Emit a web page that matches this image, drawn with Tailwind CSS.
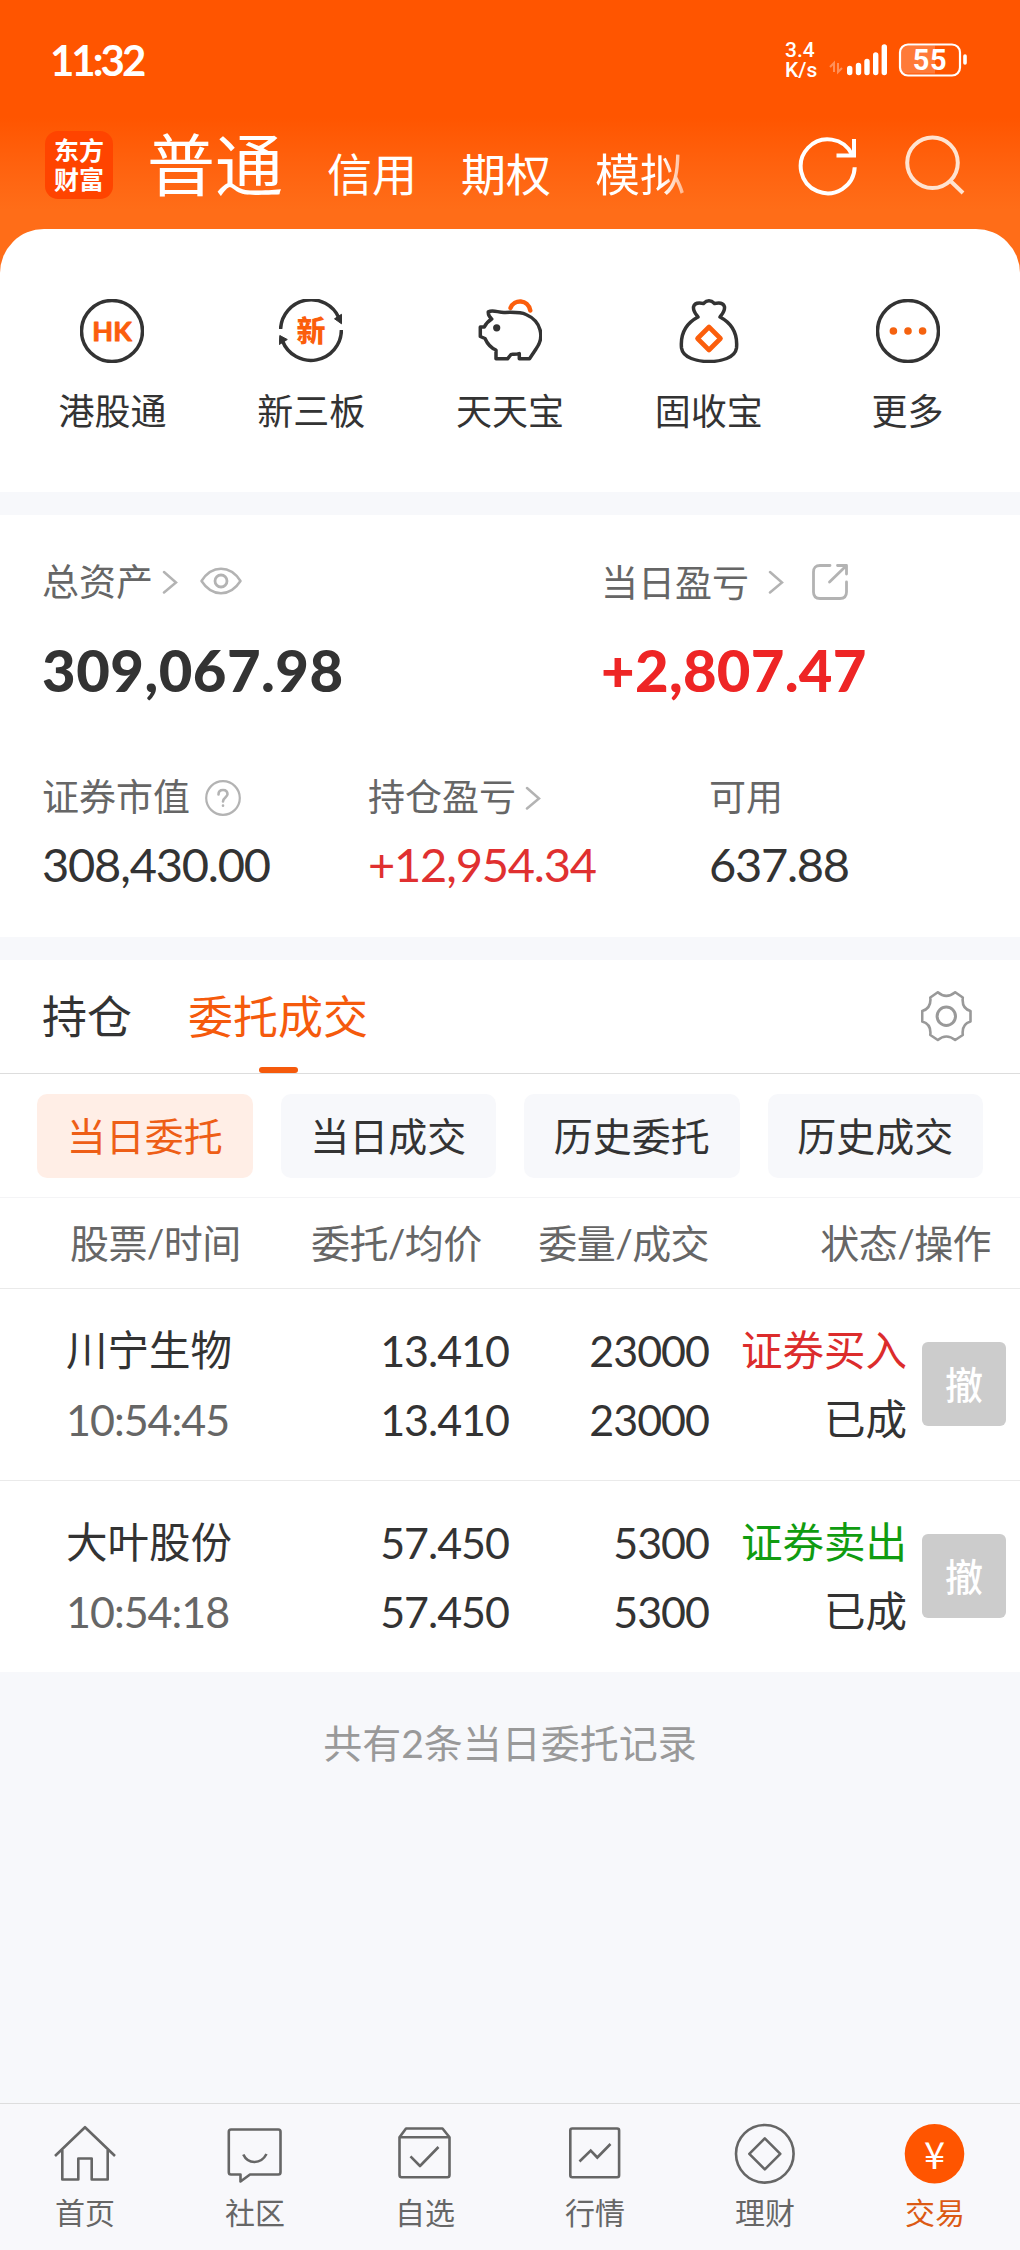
<!DOCTYPE html>
<html lang="zh-CN">
<head>
    <meta charset="UTF-8">
    <meta name="viewport" content="width=device-width, initial-scale=1.0">
    <title>普通交易</title>
    <script src="https://cdn.jsdelivr.net/npm/@tailwindcss/browser@4"></script>
</head>
<body class="flex flex-col w-[1020px] h-[2250px] overflow-hidden bg-[#f7f8fb] text-[#333] leading-none whitespace-nowrap font-[Lato,'Noto_Sans_CJK_SC',sans-serif]">

    <!-- Header -->
    <div class="h-[280px] shrink-0 bg-linear-to-b from-[#ff5500] from-42% to-[#ff6d18] to-75% text-white">
        <div class="h-[120px] flex items-center justify-between pl-[50px] pr-[45px]">
            <span class="text-[42px] font-bold tracking-[-3px]">11:32</span>
            <div class="flex items-center">
                <div class="flex flex-col w-[36px] text-[21px] leading-[20px] font-medium font-[Roboto]">
                    <span>3.4</span>
                    <span>K/s</span>
                </div>
                <svg class="ml-2 w-[146px] h-[36px]" viewBox="0 0 146 36" fill="none">
                    <path d="M1 25l4-4v9M9 21v9l4-4" stroke="#fff" stroke-opacity=".35" stroke-width="2"/>
                    <path d="M20.700 26.500v4M29.500 23.500v7M38 19.500v11M46.700 13v17.500M55.300 5v25.500" stroke="#fff" stroke-width="5.400" stroke-linecap="round"/>
                    <path d="M71 9.500q0-6 6-6H106v28H77q-6 0-6-6z" fill="#fff" fill-opacity=".22"/>
                    <rect x="71" y="2.500" width="60" height="31" rx="8" stroke="#fff" stroke-width="2.200"/>
                    <path d="M136 14v7" stroke="#fff" stroke-width="3.600" stroke-linecap="round"/>
                    <text x="101" y="28" fill="#fff" text-anchor="middle" font-family="Roboto" font-weight="700" font-size="29" letter-spacing=".5">55</text>
                </svg>
            </div>
        </div>
        <div class="h-[109px] flex items-center pl-[45px]">
            <div class="w-[68px] h-[68px] -mt-[19px] rounded-[13px] bg-[#ff4400] flex flex-col items-center justify-center gap-1 text-[25px] font-bold">
                <span>东方</span>
                <span>财富</span>
            </div>
            <span class="ml-[34px] -mt-[19px] text-[68px] font-normal">普通</span>
            <span class="ml-[44px] mt-[2px] text-[45px]">信用</span>
            <span class="ml-[44px] mt-[2px] text-[45px]">期权</span>
            <span class="ml-[44px] mt-[2px] text-[45px] bg-linear-to-r from-white from-75% to-white/50 bg-clip-text text-transparent">模拟</span>
            <svg class="ml-[111px] -mt-[17px] w-[64px] h-[64px]" viewBox="0 0 64 64" fill="none" stroke="#fff" stroke-width="4">
                <path d="M58.700 33.300A27 27 0 1 1 56 20.500"/>
                <path d="M58 5v16.500H40.500"/>
            </svg>
            <svg class="ml-[44px] -mt-[17px] w-[64px] h-[64px]" viewBox="0 0 64 64" fill="none" stroke="#ffe3d0" stroke-width="4">
                <circle cx="28.500" cy="28.700" r="25.300"/>
                <path d="M46 46.500L59 59"/>
            </svg>
        </div>
    </div>

    <!-- Shortcuts -->
    <div class="h-[263px] -mt-[51px] shrink-0 rounded-t-[44px] bg-white grid grid-cols-5 px-[13px] pt-[70px] text-[36px]">
        <div class="flex flex-col items-center gap-[30px]">
            <svg class="w-[64px] h-[64px]" viewBox="0 0 64 64" fill="none">
                <circle cx="32" cy="32" r="30.500" stroke="#333" stroke-width="3.500"/>
                <text x="32" y="42" text-anchor="middle" fill="#fb5e0c" stroke="#fb5e0c" stroke-linejoin="round" font-family="Lato" font-weight="700" font-size="27">HK</text>
            </svg>
            <span>港股通</span>
        </div>
        <div class="flex flex-col items-center gap-[30px]">
            <svg class="w-[64px] h-[64px]" viewBox="0 0 64 64" fill="none">
                <path d="M1.600 30A30.500 30.500 0 0 1 60 19M62.400 31A30.500 30.500 0 0 1 3.500 42" stroke="#333" stroke-width="3.500"/>
                <path d="M55.500 19.800l7-4.500v9.500zM.800 36.500l7.500 4-8 5z" fill="#333" stroke="#333"/>
                <text x="32" y="42.500" text-anchor="middle" fill="#fb5e0c" font-family="Noto Sans CJK SC" font-weight="900" font-size="29">新</text>
            </svg>
            <span>新三板</span>
        </div>
        <div class="flex flex-col items-center gap-[30px]">
            <svg class="w-[64px] h-[64px]" viewBox="0 0 64 64" fill="none">
                <path d="M32.500 9C36 0 50 0 52.300 11.500" stroke="#fb5e0c" stroke-width="4.400" stroke-linecap="round"/>
                <path d="M10.300 12.800C15 10.500 20 13.500 26 13.500C34 13.200 42 12.700 48 15.500C63 22 67 38 58 50L51.500 59.800H41.300V54.500C38 56 34 55 33 55.500L29.500 59.800H18V51C13 49 9 44 7 39.500L2.300 37.500V28H6.300C8 24.500 10.500 22 13.700 20C11.500 18 10 15.500 10.300 12.800z" stroke="#333" stroke-width="3.500" stroke-linejoin="round"/>
                <circle cx="18.700" cy="28.800" r="3.600" fill="#333"/>
            </svg>
            <span>天天宝</span>
        </div>
        <div class="flex flex-col items-center gap-[30px]">
            <svg class="w-[64px] h-[64px]" viewBox="0 0 64 64" fill="none">
                <path d="M21 18C6 26 3.500 38 4.500 49C6 59 20 62.500 32 62.500S58 59 59.500 49C60.500 38 58 26 43 18C46 14 48 12 47.500 8C46.500 3.500 42 3.500 37.500 4.500Q32 -1 26.500 4.500C22 3.500 17.500 3.500 16.500 8C16 12 18 14 21 18z" stroke="#333" stroke-width="3.500" stroke-linejoin="round"/>
                <path d="M32 28L43.500 39.500L32 51L20.500 39.500z" stroke="#fb5e0c" stroke-width="4.600" stroke-linejoin="round"/>
            </svg>
            <span>固收宝</span>
        </div>
        <div class="flex flex-col items-center gap-[30px]">
            <svg class="w-[64px] h-[64px]" viewBox="0 0 64 64" fill="none">
                <circle cx="32" cy="32" r="30.500" stroke="#333" stroke-width="3.500"/>
                <path d="M17.400 32h0M32 32h0M46.600 32h0" stroke="#f5620f" stroke-width="7.600" stroke-linecap="round"/>
            </svg>
            <span>更多</span>
        </div>
    </div>

    <!-- Assets -->
    <div class="h-[422px] mt-[23px] shrink-0 bg-white pl-[42px]">
        <div class="flex pt-[48px]">
            <div class="w-[559px]">
                <div class="flex items-center h-[38px] text-[37px] text-[#666]">
                    <span class="-mt-[2px]">总资产</span>
                    <svg class="ml-[9px] w-[16px] h-[24px]" viewBox="0 0 16 24" fill="none" stroke="#b3b3b3" stroke-width="2.500" stroke-linecap="round"><path d="M2 2l12 10.500L2 22.500"/></svg>
                    <svg class="ml-[22px] mb-[3px] w-[42px] h-[28px]" viewBox="0 0 42 28" fill="none" stroke="#b3b3b3">
                        <path d="M1.500 14C12-2.300 30-2.300 40.500 14C30 30.300 12 30.300 1.500 14z" stroke-width="2.500" stroke-linejoin="round"/>
                        <circle cx="21" cy="14" r="6" stroke-width="2.800"/>
                    </svg>
                </div>
                <div class="mt-[40px] text-[58px] font-black tracking-[0.500px]">309,067.98</div>
            </div>
            <div>
                <div class="flex items-center h-[38px] text-[37px] text-[#666]">
                    <span>当日盈亏</span>
                    <svg class="ml-[19px] w-[16px] h-[24px]" viewBox="0 0 16 24" fill="none" stroke="#b3b3b3" stroke-width="2.500" stroke-linecap="round"><path d="M2 2l12 10.500L2 22.500"/></svg>
                    <svg class="ml-[28px] w-[36px] h-[36px]" viewBox="0 0 36 36" fill="none" stroke="#b3b3b3" stroke-width="2.800" stroke-linecap="round" stroke-linejoin="round">
                        <path d="M18 1.500H8Q1.500 1.500 1.500 8V28Q1.500 34.500 8 34.500H28Q34.500 34.500 34.500 28V18M25.500 1.500H34.500V10M34 2L17.500 18"/>
                    </svg>
                </div>
                <div class="mt-[40px] text-[58px] font-black tracking-[0.300px] text-[#ee2525]">+2,807.47</div>
            </div>
        </div>
        <div class="flex mt-[78px]">
            <div class="w-[326px]">
                <div class="flex items-center h-[38px] text-[37px] text-[#666]">
                    <span>证券市值</span>
                    <svg class="ml-[15px] mt-1 w-[36px] h-[36px]" viewBox="0 0 36 36" fill="none">
                        <circle cx="18" cy="18" r="16.800" stroke="#b3b3b3" stroke-width="2.200"/>
                        <path d="M13.500 14.500Q13.500 10 18 10T22.500 14.300C22.500 17 18 17.500 18 21.500M18 25.500v.300" stroke="#b3b3b3" stroke-width="2.600" stroke-linecap="round"/>
                    </svg>
                </div>
                <div class="mt-[26px] text-[47px] tracking-[-1.200px]">308,430.00</div>
            </div>
            <div class="w-[341px]">
                <div class="flex items-center h-[38px] text-[37px] text-[#666]">
                    <span>持仓盈亏</span>
                    <svg class="ml-[9px] mt-1 w-[16px] h-[24px]" viewBox="0 0 16 24" fill="none" stroke="#b3b3b3" stroke-width="2.500" stroke-linecap="round"><path d="M2 2l12 10.500L2 22.500"/></svg>
                </div>
                <div class="mt-[26px] text-[47px] tracking-[-1.200px] text-[#e03030]">+12,954.34</div>
            </div>
            <div>
                <div class="flex items-center h-[38px] text-[37px] text-[#666]">可用</div>
                <div class="mt-[26px] text-[47px] tracking-[-1.300px]">637.88</div>
            </div>
        </div>
    </div>

    <!-- Tabs -->
    <div class="h-[114px] mt-[23px] shrink-0 bg-white border-b border-[#ddd] flex items-center pl-[42px] pr-[48px] text-[45px]">
        <span class="mt-[2px]">持仓</span>
        <div class="relative ml-[56px] h-full flex items-center text-[#f55a0c]">
            <span class="mt-[2px]">委托成交</span>
            <div class="absolute bottom-0 left-[71px] w-[39px] h-[6px] rounded-full bg-[#f55a0c]"></div>
        </div>
        <svg class="ml-auto w-[51px] h-[51px]" viewBox="0 0 51 51" fill="none" stroke="#999" stroke-width="2.600" stroke-linejoin="round">
            <path d="M16.800 1.300Q25.200 8.500 34.200 1.300L41.800 6.500Q40.500 17.500 49.500 20V30.500Q40.500 33 41.800 44L34.200 49Q25.200 42 16.800 49L9.300 44Q10.500 33 1.200 30.500V20Q10.500 17.500 9.300 6.500z"/>
            <circle cx="25.300" cy="25.300" r="9.200" stroke-width="3"/>
        </svg>
    </div>

    <!-- Filters -->
    <div class="h-[124px] shrink-0 bg-white border-b border-[#f4f4f6] grid grid-cols-4 gap-[28px] px-[37px] pt-[20px] text-[39px]">
        <div class="h-[84px] rounded-[10px] bg-[#ffeee6] text-[#ee5e16] flex items-center justify-center">当日委托</div>
        <div class="h-[84px] rounded-[10px] bg-[#f7f8fb] flex items-center justify-center">当日成交</div>
        <div class="h-[84px] rounded-[10px] bg-[#f7f8fb] flex items-center justify-center">历史委托</div>
        <div class="h-[84px] rounded-[10px] bg-[#f7f8fb] flex items-center justify-center">历史成交</div>
    </div>

    <!-- Orders -->
    <div class="h-[91px] shrink-0 bg-white border-b border-[#eaeaea] flex items-center pl-[70px] text-[39px] tracking-[-0.600px] text-[#666]">
        <span class="w-[241px]">股票/时间</span>
        <span class="w-[171px]">委托/均价</span>
        <span class="w-[227px] text-right">委量/成交</span>
        <span class="w-[282px] text-right">状态/操作</span>
    </div>
    <div class="h-[192px] shrink-0 bg-white border-b border-[#eaeaea] flex items-center pl-[66px] text-[43px] tracking-[-1px]">
        <div class="w-[220px] flex flex-col gap-[26px]">
            <span class="text-[41.500px] leading-[43px] tracking-normal">川宁生物</span>
            <span class="text-[#666]">10:54:45</span>
        </div>
        <div class="w-[223px] flex flex-col gap-[26px] text-right">
            <span>13.410</span>
            <span>13.410</span>
        </div>
        <div class="w-[200px] flex flex-col gap-[26px] text-right">
            <span>23000</span>
            <span>23000</span>
        </div>
        <div class="w-[198px] flex flex-col gap-[26px] text-right text-[41.500px] leading-[43px] tracking-normal">
            <span class="text-[#dc2c2c]">证券买入</span>
            <span>已成</span>
        </div>
        <div class="ml-[15px] -mt-[2px] w-[84px] h-[84px] rounded-[6px] bg-[#ccc] text-white text-[38px] font-medium tracking-normal flex items-center justify-center">撤</div>
    </div>
    <div class="h-[191px] shrink-0 bg-white flex items-center pl-[66px] text-[43px] tracking-[-1px]">
        <div class="w-[220px] flex flex-col gap-[26px]">
            <span class="text-[41.500px] leading-[43px] tracking-normal">大叶股份</span>
            <span class="text-[#666]">10:54:18</span>
        </div>
        <div class="w-[223px] flex flex-col gap-[26px] text-right">
            <span>57.450</span>
            <span>57.450</span>
        </div>
        <div class="w-[200px] flex flex-col gap-[26px] text-right">
            <span>5300</span>
            <span>5300</span>
        </div>
        <div class="w-[198px] flex flex-col gap-[26px] text-right text-[41.500px] leading-[43px] tracking-normal">
            <span class="text-[#109c10]">证券卖出</span>
            <span>已成</span>
        </div>
        <div class="ml-[15px] -mt-[2px] w-[84px] h-[84px] rounded-[6px] bg-[#ccc] text-white text-[38px] font-medium tracking-normal flex items-center justify-center">撤</div>
    </div>
    <div class="mt-[52px] text-center text-[39px] text-[#999]">共有2条当日委托记录</div>

    <!-- Bottom bar -->
    <div class="mt-auto h-[147px] shrink-0 bg-[#f8f8fb] border-t border-[#ddd] grid grid-cols-6 pt-[18px] text-[30px] text-[#666]">
        <div class="flex flex-col items-center gap-[11px]">
            <svg class="w-[64px] h-[64px]" viewBox="0 0 64 64" fill="none" stroke="#666" stroke-width="2.600" stroke-linejoin="round">
                <path d="M2 34L32 5.200L62 34M9.300 28V57.500H25.300V36.500H38.700V57.500H54.700V28"/>
            </svg>
            <span>首页</span>
        </div>
        <div class="flex flex-col items-center gap-[11px]">
            <svg class="w-[64px] h-[64px]" viewBox="0 0 64 64" fill="none" stroke="#666" stroke-width="2.600" stroke-linejoin="round">
                <path d="M8 7.500H55.300Q57.500 7.500 57.500 9.700V50.300Q57.500 52.500 55.300 52.500H27L17.500 59.500V52.500H8Q5.800 52.500 5.800 50.300V9.700Q5.800 7.500 8 7.500z"/>
                <path d="M20.300 32.500C25 42.500 38 42.500 43.500 32"/>
            </svg>
            <span>社区</span>
        </div>
        <div class="flex flex-col items-center gap-[11px]">
            <svg class="w-[64px] h-[64px]" viewBox="0 0 64 64" fill="none" stroke="#666" stroke-width="2.600" stroke-linejoin="round">
                <path d="M6.500 15.300L13 6.500H49.500L56.500 15.300V53Q56.500 55.300 54.300 55.300H8.700Q6.500 55.300 6.500 53zH56.500M17.500 34.300L27 44L45.500 25"/>
            </svg>
            <span>自选</span>
        </div>
        <div class="flex flex-col items-center gap-[11px]">
            <svg class="w-[64px] h-[64px]" viewBox="0 0 64 64" fill="none" stroke="#666" stroke-width="2.600">
                <rect x="7.300" y="6.500" width="48.800" height="48.800" rx="2"/>
                <path d="M16.500 39.500L27.700 28.500L34.300 35.500L47.500 22"/>
            </svg>
            <span>行情</span>
        </div>
        <div class="flex flex-col items-center gap-[11px]">
            <svg class="w-[64px] h-[64px]" viewBox="0 0 64 64" fill="none" stroke="#666" stroke-width="2.600" stroke-linejoin="round">
                <circle cx="31.800" cy="31.800" r="28.800"/>
                <path d="M31.800 16.300L47.300 31.800L31.800 47.300L16.300 31.800z"/>
            </svg>
            <span>理财</span>
        </div>
        <div class="flex flex-col items-center gap-[11px] text-[#dc5a14]">
            <svg class="w-[64px] h-[64px]" viewBox="0 0 64 64">
                <circle cx="31.500" cy="31.800" r="29.800" fill="#ff5500"/>
                <text x="31.500" y="46.500" text-anchor="middle" fill="#fff" font-family="Noto Sans CJK SC" font-size="38">¥</text>
            </svg>
            <span>交易</span>
        </div>
    </div>
</body>
</html>
